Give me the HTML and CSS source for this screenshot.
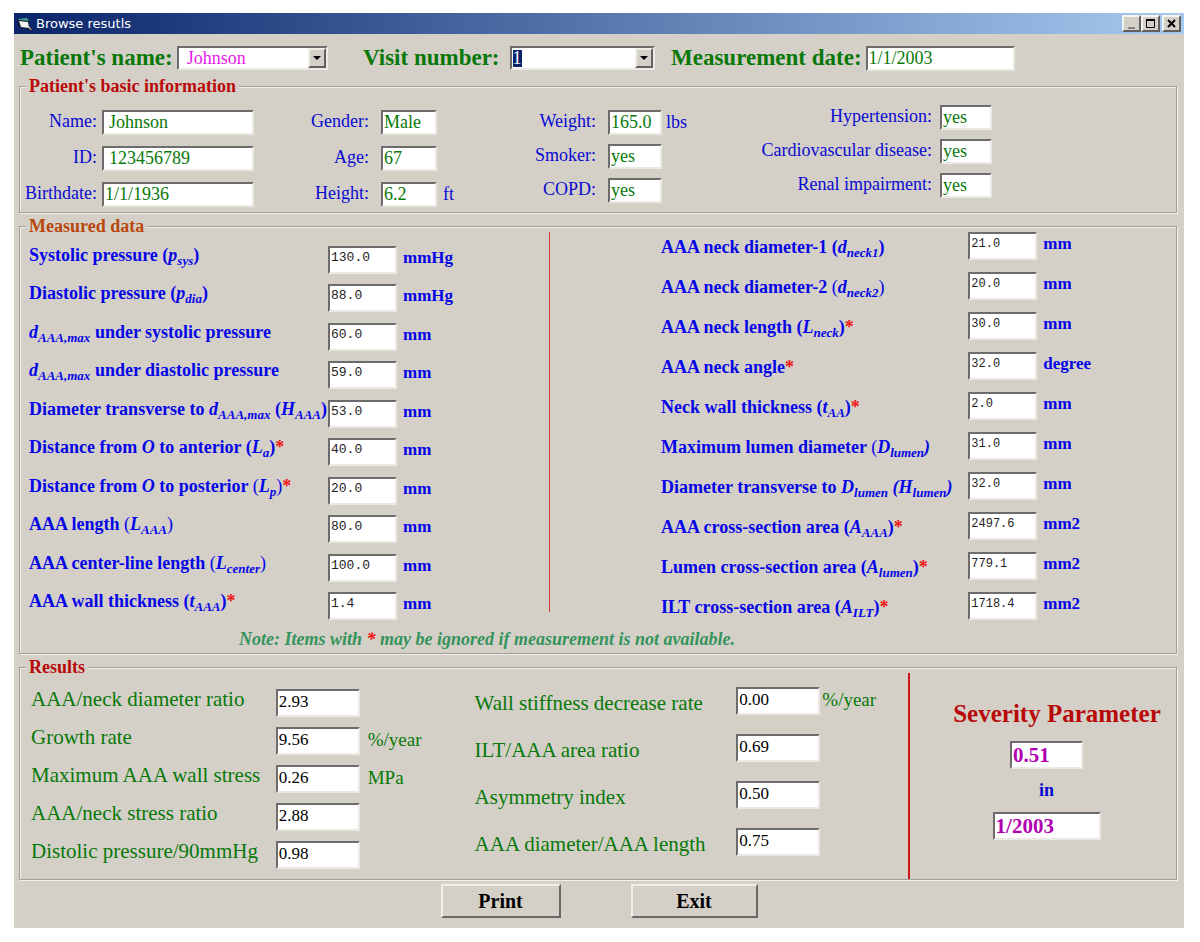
FILE: index.html
```html
<!DOCTYPE html>
<html lang="en">
<head>
<meta charset="utf-8">
<meta name="viewport" content="width=device-width, initial-scale=1">
<title>Browse resutls</title>
<link rel="stylesheet" href="styles.css">
</head>
<body>
<main class="window">
  <header class="titlebar">
    <svg class="titlebar-icon" viewBox="0 0 16 14" aria-hidden="true">
      <path d="M1 2l9-1 2 2v9l-8-1-3-3z" fill="#101820"/>
      <path d="M1 2l9-1 2 3-10-1z" fill="#3f9f9c"/>
      <path d="M2 4l9 1 1 6-8-1z" fill="#f4f4f4"/>
      <path d="M12 9l2 3h-2z" fill="#d8c070"/>
      <path d="M13 12h2v1h-2z" fill="#b06050"/>
    </svg>
    <h1 class="titlebar-text">Browse resutls</h1>
    <button class="winbtn" type="button" aria-label="Minimize"><svg viewBox="0 0 15 13"><path d="M4 10h7v2H4z" fill="#808080"/></svg></button>
    <button class="winbtn" type="button" aria-label="Maximize"><svg viewBox="0 0 15 13"><path d="M3.500 2.500h8v8h-8z" fill="none" stroke="#000"/><path d="M3 2h9v2H3z"/></svg></button>
    <button class="winbtn winbtn-close" type="button" aria-label="Close"><svg viewBox="0 0 15 13"><path d="M4 3l7 7M11 3l-7 7" stroke="#000" stroke-width="2"/></svg></button>
  </header>

  <form class="form">
    <div class="selectors">
      <div class="selector">
        <label for="patient">Patient's name:</label>
        <span class="combo combo-patient">
          <select id="patient"><option>Johnson</option></select>
          <span class="combo-arrow" aria-hidden="true"><svg viewBox="0 0 8 4"><path d="M0 0h8L4 4z"/></svg></span>
        </span>
      </div>
      <div class="selector selector-visit">
        <label for="visit">Visit number:</label>
        <span class="combo combo-visit">
          <select id="visit"><option>1</option></select>
          <span class="combo-arrow" aria-hidden="true"><svg viewBox="0 0 8 4"><path d="M0 0h8L4 4z"/></svg></span>
        </span>
      </div>
      <div class="selector">
        <label for="date">Measurement date:</label>
        <input class="field field-date" id="date" value="1/1/2003">
      </div>
    </div>

    <fieldset class="group">
      <legend>Patient's basic information</legend>
      <div class="basic">
        <div class="basic-col basic-identity">
          <label for="name">Name:</label><input class="field field-indent" id="name" value="Johnson">
          <label for="pid">ID:</label><input class="field field-indent" id="pid" value="123456789">
          <label for="birth">Birthdate:</label><input class="field" id="birth" value="1/1/1936">
        </div>
        <div class="basic-col basic-body">
          <label for="gender">Gender:</label><input class="field" id="gender" value="Male"><span></span>
          <label for="age">Age:</label><input class="field" id="age" value="67"><span></span>
          <label for="height">Height:</label><input class="field" id="height" value="6.2"><span>ft</span>
        </div>
        <div class="basic-col basic-habits">
          <label for="weight">Weight:</label><input class="field" id="weight" value="165.0"><span>lbs</span>
          <label for="smoker">Smoker:</label><input class="field" id="smoker" value="yes"><span></span>
          <label for="copd">COPD:</label><input class="field" id="copd" value="yes"><span></span>
        </div>
        <div class="basic-col basic-history">
          <label for="hyper">Hypertension:</label><input class="field" id="hyper" value="yes">
          <label for="cardio">Cardiovascular disease:</label><input class="field" id="cardio" value="yes">
          <label for="renal">Renal impairment:</label><input class="field" id="renal" value="yes">
        </div>
      </div>
    </fieldset>

    <fieldset class="group group-measured">
      <legend>Measured data</legend>
      <div class="measured">
        <div class="measures measures-left">
          <div class="measure"><label for="m1">Systolic pressure (<i>p<sub>sys</sub></i>)</label><input class="field" id="m1" value="130.0"><span>mmHg</span></div>
          <div class="measure"><label for="m2">Diastolic pressure (<i>p<sub>dia</sub></i>)</label><input class="field" id="m2" value="88.0"><span>mmHg</span></div>
          <div class="measure"><label for="m3"><i>d<sub>AAA,max</sub></i> under systolic pressure</label><input class="field" id="m3" value="60.0"><span>mm</span></div>
          <div class="measure"><label for="m4"><i>d<sub>AAA,max</sub></i> under diastolic pressure</label><input class="field" id="m4" value="59.0"><span>mm</span></div>
          <div class="measure"><label for="m5">Diameter transverse to <i>d<sub>AAA,max</sub></i> (<i>H<sub>AAA</sub></i>)</label><input class="field" id="m5" value="53.0"><span>mm</span></div>
          <div class="measure"><label for="m6">Distance from <i>O</i> to anterior (<i>L<sub>a</sub></i>)<b class="star">*</b></label><input class="field" id="m6" value="40.0"><span>mm</span></div>
          <div class="measure"><label for="m7">Distance from <i>O</i> to posterior <span class="light">(</span><i>L<sub>p</sub></i><span class="light">)</span><b class="star">*</b></label><input class="field" id="m7" value="20.0"><span>mm</span></div>
          <div class="measure"><label for="m8">AAA length <span class="light">(</span><i>L<sub>AAA</sub></i><span class="light">)</span></label><input class="field" id="m8" value="80.0"><span>mm</span></div>
          <div class="measure"><label for="m9">AAA center-line length <span class="light">(</span><i>L<sub>center</sub></i><span class="light">)</span></label><input class="field" id="m9" value="100.0"><span>mm</span></div>
          <div class="measure"><label for="m10">AAA wall thickness (<i>t<sub>AAA</sub></i>)<b class="star">*</b></label><input class="field" id="m10" value="1.4"><span>mm</span></div>
        </div>
        <div class="measured-divider"></div>
        <div class="measures measures-right">
          <div class="measure"><label for="n1">AAA neck diameter-1 (<i>d<sub>neck1</sub></i>)</label><input class="field" id="n1" value="21.0"><span>mm</span></div>
          <div class="measure"><label for="n2">AAA neck diameter-2 <span class="light">(</span><i>d<sub>neck2</sub></i><span class="light">)</span></label><input class="field" id="n2" value="20.0"><span>mm</span></div>
          <div class="measure"><label for="n3">AAA neck length (<i>L<sub>neck</sub></i>)<b class="star">*</b></label><input class="field" id="n3" value="30.0"><span>mm</span></div>
          <div class="measure"><label for="n4">AAA neck angle<b class="star">*</b></label><input class="field" id="n4" value="32.0"><span>degree</span></div>
          <div class="measure"><label for="n5">Neck wall thickness (<i>t<sub>AA</sub></i>)<b class="star">*</b></label><input class="field" id="n5" value="2.0"><span>mm</span></div>
          <div class="measure"><label for="n6">Maximum lumen diameter <span class="light">(</span><i>D<sub>lumen</sub>)</i></label><input class="field" id="n6" value="31.0"><span>mm</span></div>
          <div class="measure"><label for="n7">Diameter transverse to <i>D<sub>lumen</sub> (H<sub>lumen</sub>)</i></label><input class="field" id="n7" value="32.0"><span>mm</span></div>
          <div class="measure"><label for="n8">AAA cross-section area (<i>A<sub>AAA</sub></i>)<b class="star">*</b></label><input class="field" id="n8" value="2497.6"><span>mm2</span></div>
          <div class="measure"><label for="n9">Lumen cross-section area (<i>A<sub>lumen</sub></i>)<b class="star">*</b></label><input class="field" id="n9" value="779.1"><span>mm2</span></div>
          <div class="measure"><label for="n10">ILT cross-section area (<i>A<sub>ILT</sub></i>)<b class="star">*</b></label><input class="field" id="n10" value="1718.4"><span>mm2</span></div>
        </div>
      </div>
      <p class="note">Note: Items with <b class="star">*</b> may be ignored if measurement is not available.</p>
    </fieldset>

    <fieldset class="group group-results">
      <legend>Results</legend>
      <div class="results">
        <div class="ratios ratios-left">
          <label for="r1">AAA/neck diameter ratio</label><input class="field" id="r1" value="2.93"><span></span>
          <label for="r2">Growth rate</label><input class="field" id="r2" value="9.56"><span>%/year</span>
          <label for="r3">Maximum AAA wall stress</label><input class="field" id="r3" value="0.26"><span>MPa</span>
          <label for="r4">AAA/neck stress ratio</label><input class="field" id="r4" value="2.88"><span></span>
          <label for="r5">Distolic pressure/90mmHg</label><input class="field" id="r5" value="0.98"><span></span>
        </div>
        <div class="ratios ratios-right">
          <label for="s1">Wall stiffness decrease rate</label><input class="field" id="s1" value="0.00"><span>%/year</span>
          <label for="s2">ILT/AAA area ratio</label><input class="field" id="s2" value="0.69"><span></span>
          <label for="s3">Asymmetry index</label><input class="field" id="s3" value="0.50"><span></span>
          <label for="s4">AAA diameter/AAA length</label><input class="field" id="s4" value="0.75"><span></span>
        </div>
        <div class="severity">
          <label class="severity-title" for="severity">Severity Parameter</label>
          <div class="severity-values">
            <input class="field severity-value" id="severity" value="0.51">
            <label for="severity-date">in</label>
            <input class="field severity-date" id="severity-date" value="1/2003">
          </div>
        </div>
      </div>
    </fieldset>

    <div class="actions">
      <button class="action action-print" type="button">Print</button>
      <button class="action action-exit" type="button">Exit</button>
    </div>
  </form>
</main>
</body>
</html>
```
FILE: styles.css
```css
* {
  box-sizing: border-box;
}

body {
  margin: 0;
  padding: 13px 16px 16px 14px;
  background: #fff;
  color: #0a0ad2;
  font-family: "Liberation Serif", "Times New Roman", serif;
  font-size: 18px;
}

input,
select,
button {
  font: inherit;
  color: inherit;
}

label,
span {
  white-space: nowrap;
}

.window {
  min-width: 1100px;
  background: #d4d0c8;
}

/* Title bar */
.titlebar {
  display: flex;
  align-items: center;
  height: 21px;
  padding: 0 3px;
  background: linear-gradient(90deg, #0a246a, #a6caf0);
}

.titlebar-icon {
  width: 16px;
  height: 14px;
}

.titlebar-text {
  flex: 1;
  margin: 0 0 0 3px;
  color: #fff;
  font: 13px "DejaVu Sans", Verdana, sans-serif;
}

.winbtn {
  width: 19px;
  height: 17px;
  padding: 0;
  background: #d4d0c8;
  border: 2px solid;
  border-color: #f4f4f0 #606060 #606060 #f4f4f0;
}

.winbtn-close {
  margin-left: 2px;
}

.winbtn svg {
  display: block;
  width: 15px;
  height: 13px;
}

/* Sunken boxes */
.field,
.combo {
  background: #fff;
  border: 2px solid;
  border-color: #6c6c6c #ebe9e4 #ebe9e4 #6c6c6c;
  border-radius: 0;
}

.field {
  width: 100%;
  min-width: 0;
  height: 25px;
  padding: 0 1px;
  color: #087808;
  outline: 0;
}

.field-indent {
  padding-left: 5px;
}

/* Patient, visit and date */
.selectors {
  display: grid;
  grid-template-columns: 343fr 308fr 507fr;
  align-items: center;
  height: 46px;
  padding: 2px 6px 0;
}

.selector {
  display: flex;
  align-items: center;
  gap: 4px;
}

.selector-visit {
  gap: 10px;
}

.selector label {
  color: #087808;
  font-size: 23px;
  font-weight: bold;
}

.combo {
  display: flex;
  height: 24px;
}

.combo select {
  flex: 1;
  min-width: 0;
  padding: 0;
  appearance: none;
  background: none;
  border: 0;
  outline: 0;
}

.combo-patient {
  width: 151px;
}

.combo-patient select {
  padding-left: 8px;
  color: #e818e8;
}

.combo-visit {
  width: 145px;
}

.combo-visit select {
  background: linear-gradient(#0a246a, #0a246a) 1px 2px / 9px 17px no-repeat;
  padding-left: 1px;
  color: #fff;
}

.combo-arrow {
  display: grid;
  place-items: center;
  width: 18px;
  background: #d4d0c8;
  border: 2px solid;
  border-color: #f0eee8 #606060 #606060 #f0eee8;
}

.combo-arrow svg {
  width: 8px;
  height: 4px;
}

.field-date {
  width: 149px;
}

/* Etched group boxes */
.group {
  min-width: 0;
  margin: 0 7px 7px 5px;
  padding: 0;
  border: 1px solid #a09e9a;
  box-shadow: 1px 1px 0 #f2f0ec, inset 1px 1px 0 #f2f0ec;
}

.group-results {
  margin-bottom: 4px;
}

.group legend {
  margin-left: 6px;
  padding: 0 3px;
  background: #d4d0c8;
  color: #b80808;
  font-weight: bold;
  line-height: 12px;
}

.group-measured legend {
  color: #b8480c;
}

/* Basic information */
.basic {
  display: grid;
  grid-template-columns: 234fr 209fr 229fr 300fr 184fr;
  padding: 18px 0 5px;
}

.basic-col {
  display: grid;
  align-content: start;
  align-items: center;
  row-gap: 11px;
}

.basic-col label {
  padding-bottom: 3px;
  text-align: right;
}

.basic-identity {
  grid-template-columns: 1fr 152px;
  column-gap: 5px;
}

.basic-body {
  grid-template-columns: 1fr 56px 20px;
  column-gap: 6px;
}

.basic-body label {
  padding-right: 6px;
}

.basic-habits {
  grid-template-columns: 1fr 54px 26px;
  column-gap: 4px;
  row-gap: 9px;
}

.basic-habits label {
  padding-right: 8px;
}

.basic-history {
  grid-template-columns: 1fr 52px;
  column-gap: 8px;
  row-gap: 9px;
  margin-top: -5px;
}

/* Measured data */
.measured {
  display: grid;
  grid-template-columns: 529fr 1px 626fr;
  color: #0606e6;
  font-weight: bold;
}

.measured-divider {
  margin-bottom: 8px;
  background: #d83c34;
}

.measures {
  display: flex;
  flex-direction: column;
  justify-content: space-between;
  gap: 10px;
}

.measures-left {
  padding: 14px 0 0 9px;
}

.measures-right {
  gap: 12px;
  padding-left: 111px;
}

.measure {
  display: grid;
  grid-template-columns: 299fr 69px 152fr;
}

.measures-right .measure {
  grid-template-columns: 308fr 69px 139fr;
}

.measure label {
  line-height: 18px;
}

.measures-right label {
  line-height: 30px;
  height: 28px;
}

.measure > span {
  padding-left: 6px;
  font-size: 17px;
  line-height: 24px;
}

.measure .field {
  height: 28px;
  padding-bottom: 5px;
  color: #222;
  font-family: "Liberation Mono", "Courier New", monospace;
  font-size: 13px;
  font-weight: normal;
}

.measures-right .field {
  font-size: 12px;
}

.light {
  font-weight: normal;
}

sub {
  font-size: 13px;
  line-height: 0;
  vertical-align: -4px;
}

.star {
  color: #f01010;
}

.note {
  margin: 0;
  padding: 9px 0 4px 219px;
  color: #34945c;
  font-style: italic;
  font-weight: bold;
  line-height: 20px;
}

/* Results */
.results {
  display: grid;
  grid-template-columns: 455fr 434fr 268fr;
  color: #087808;
}

.ratios {
  display: grid;
  align-content: start;
}

.ratios label {
  font-size: 21px;
}

.ratios span {
  font-size: 19px;
  line-height: 26px;
}

.ratios .field {
  height: 28px;
  padding-bottom: 3px;
  color: #000;
  font-size: 17px;
}

.ratios-left {
  grid-template-columns: 245fr 84px 115fr;
  row-gap: 10px;
  padding: 16px 0 10px 11px;
}

.ratios-left label {
  line-height: 20px;
}

.ratios-left span {
  padding-left: 8px;
}

.ratios-right {
  grid-template-columns: 262fr 84px 88fr;
  row-gap: 17px;
  padding-top: 14px;
}

.ratios-right label {
  padding-top: 2px;
  line-height: 28px;
}

.ratios-right span {
  padding-left: 2px;
}

.severity {
  padding: 27px 0 0 43px;
  border-left: 2px solid #c81818;
}

.severity-title {
  display: block;
  color: #b80808;
  font-size: 25px;
  font-weight: bold;
  line-height: 28px;
}

.severity-values {
  display: flex;
  flex-direction: column;
  align-items: center;
  gap: 11px;
  padding: 13px 36px 0 0;
  color: #0a0ad2;
  font-weight: bold;
}

.severity-values .field {
  height: 28px;
  color: #b000b0;
  font-size: 21px;
}

.severity .severity-value {
  width: 73px;
}

.severity .severity-date {
  width: 108px;
}

/* Buttons */
.actions {
  display: flex;
  justify-content: center;
  gap: 70px;
  padding: 0 0 10px;
}

.action {
  height: 34px;
  padding: 0;
  background: #d4d0c8;
  border: 2px solid;
  border-color: #f0eee8 #686868 #686868 #f0eee8;
  color: #000;
  font-size: 20px;
  font-weight: bold;
}

.action-print {
  width: 120px;
}

.action-exit {
  width: 127px;
}
```
